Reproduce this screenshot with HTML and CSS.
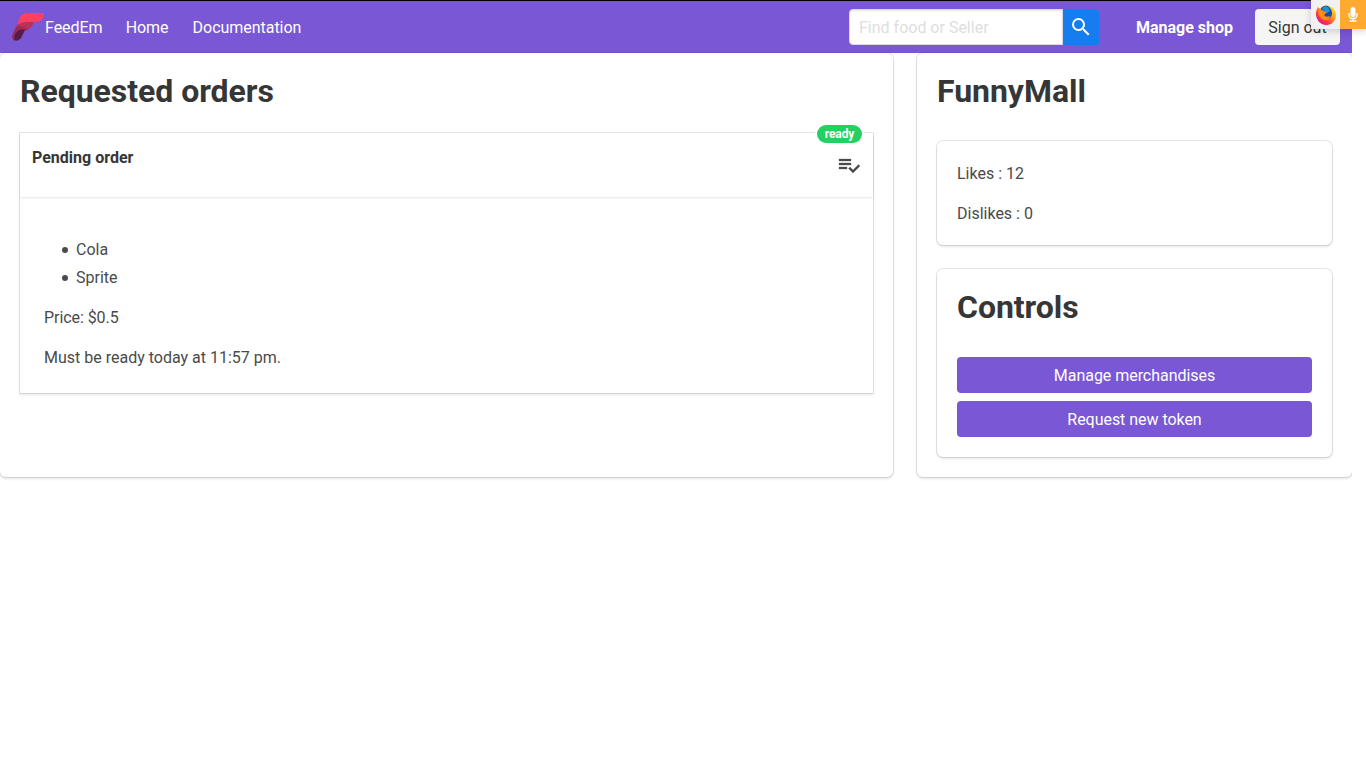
FILE: index.html
```html
<!DOCTYPE html>
<html lang="en">
<head>
<meta charset="utf-8">
<title>FeedEm</title>
<link rel="stylesheet" href="styles.css">
</head>
<body>
<div class="app">
  <nav class="navbar">
    <a class="navbar-item brand">
      <svg class="logo" viewBox="0 0 32 28" width="32" height="28">
        <path d="M8 4Q11 0 16 0H32Q32 9 23 9H15L4 15Z" fill="#ff4060"/>
        <path d="M5 12Q11 8 22 9Q19 17 12 18L1 22Z" fill="#b8335a"/>
        <path d="M1 20L4 14Q9 12 16 16Q13 18 9 18Z" fill="#9c2c55"/>
        <path d="M2 20Q8 15 13 17L9 25Q6 29 2 27Q-1 24 2 20Z" fill="#5a1a48"/>
        <path d="M4 15L0 23Q0 27 3 28Q0 22 7 17Z" fill="#963052"/>
      </svg>
      <span>FeedEm</span>
    </a>
    <a class="navbar-item">Home</a>
    <a class="navbar-item">Documentation</a>
    <div class="navbar-end">
      <form class="search">
        <input class="search-input" type="text" placeholder="Find food or Seller">
        <button class="search-button" type="button" aria-label="Search">
          <svg viewBox="0 0 24 24" width="24" height="24"><path fill="#fff" d="M9.5 3A6.5 6.5 0 0 1 16 9.5c0 1.61-.59 3.09-1.56 4.23l.27.27h.79l5 5-1.5 1.5-5-5v-.79l-.27-.27A6.52 6.52 0 0 1 9.5 16a6.5 6.5 0 0 1 0-13m0 2C7 5 5 7 5 9.5S7 14 9.5 14 14 12 14 9.5 12 5 9.5 5z"/></svg>
        </button>
      </form>
      <a class="manage">Manage shop</a>
      <a class="signout">Sign out</a>
    </div>
  </nav>
  <main class="columns">
    <section class="box orders">
      <h1 class="title">Requested orders</h1>
      <article class="card">
        <span class="tag">ready</span>
        <header class="card-header">
          <p class="card-title">Pending order</p>
          <svg class="check" viewBox="0 0 24 24" width="24" height="24"><path fill="#4a4a4a" stroke="#4a4a4a" stroke-width=".3" d="M14 10H2v2h12v-2m0-4H2v2h12V6M2 16h8v-2H2v2m19.500-4.500L23 13l-7 7-4.500-4.500L13 14l3 3 5.500-5.500z"/></svg>
        </header>
        <div class="card-content">
          <ul class="items"><li>Cola</li><li>Sprite</li></ul>
          <p class="price">Price: $0.5</p>
          <p>Must be ready today at 11:57 pm.</p>
        </div>
      </article>
    </section>
    <aside class="box shop">
      <h1 class="title">FunnyMall</h1>
      <div class="box stats"><p>Likes : 12</p><p>Dislikes : 0</p></div>
      <div class="box controls">
        <h1 class="title">Controls</h1>
        <a class="button">Manage merchandises</a>
        <a class="button">Request new token</a>
      </div>
    </aside>
  </main>
</div>
<div class="overlay">
  <div class="overlay-browser">
    <svg viewBox="0 0 22 22" width="22" height="22">
      <defs>
        <linearGradient id="flame" x1=".9" y1=".1" x2=".2" y2=".9"><stop offset="0" stop-color="#ffe226"/><stop offset=".4" stop-color="#ff9a1c"/><stop offset=".75" stop-color="#ff3647"/><stop offset="1" stop-color="#e31587"/></linearGradient>
      </defs>
      <path fill="url(#flame)" d="M2 5L3 3 5 5Q7 2 11 1L14 2Q20 4 21 10Q21 17 16 20Q9 23 4 18Q-1 12 2 5Z"/>
      <path fill="#174e9c" d="M6 4Q9 1 13 2Q17 5 17 10Q16 15 11 15Q6 14 6 9Z"/>
      <path fill="#1593e8" d="M7 4Q10 1 13 3L15 7 12 9 9 7Z"/>
      <path fill="#ff8a16" d="M3 6Q7 4 8 7L12 8 9 11Q11 14 15 12Q14 17 9 16Q3 14 3 6Z"/>
    </svg>
  </div>
  <div class="overlay-mic">
    <svg viewBox="0 0 12 16" width="12" height="16"><rect x="3.500" y="0" width="5" height="10" rx="2.500" fill="#fff"/><path d="M2 6V8Q2 11.500 6 11.500T10 8V6M6 11.500V14M2.500 14H9.500" fill="none" stroke="#fff" stroke-width="1.300"/></svg>
  </div>
</div>
</body>
</html>
```
FILE: styles.css
```css
* { box-sizing: border-box; margin: 0; padding: 0; }
html { overflow: hidden; background: #fff; }
body { font: 16px/24px Roboto, sans-serif; color: #4a4a4a; }
.app { width: 1352px; height: 768px; overflow: hidden; }
.navbar { display: flex; height: 53px; width: 1352px; border-top: 1px solid #000; background: #7957d5; color: #fff; }
.navbar::before { content: ""; position: absolute; top: 0; left: 0; width: 1366px; height: 1px; background: #000; }
.navbar-item { display: flex; align-items: center; padding: 2px 12px 0; letter-spacing: -.03px; }
.brand { padding-top: 0; }
.brand span { margin: 2px -1px 0 1px; }
.navbar-end { display: flex; align-items: center; margin-left: auto; padding-right: 12px; }
.search { display: flex; margin-right: 37px; }
.search-input { width: 214px; height: 36px; border: 1px solid #dbdbdb; border-radius: 4px 0 0 4px; padding: 0 9px; font: 16px Roboto, sans-serif; box-shadow: inset 0 1px 2px rgba(10,10,10,.1); }
.search-input::placeholder { color: #dedede; }
.search-button { display: flex; align-items: center; justify-content: center; width: 36px; height: 36px; border: 0; border-radius: 0 4px 4px 0; background: #167df0; }
.manage { width: 98px; white-space: nowrap; font-weight: 700; margin-right: 21px; padding-top: 2px; }
.signout { width: 85px; height: 36px; padding: 7px 0 5px; text-align: center; background: #f5f5f5; color: #363636; border-radius: 4px; }
.columns { display: flex; gap: 24px; }
.box { background: #fff; border-radius: 6px; padding: 20px; box-shadow: 0 2px 3px rgba(10,10,10,.1), 0 0 0 1px rgba(10,10,10,.1); }
.orders { width: 893px; height: 424px; }
.shop { width: 435px; height: 424px; }
.title { color: #363636; font-size: 32px; line-height: 36px; font-weight: 700; letter-spacing: -.04px; }
.card { position: relative; margin-top: 24px; box-shadow: 0 2px 3px rgba(10,10,10,.1), 0 0 0 1px rgba(10,10,10,.1); }
.tag { position: absolute; right: 11px; top: -8px; width: 45px; height: 18px; border-radius: 9px; background: #23d160; color: #fff; font-size: 12px; line-height: 18px; font-weight: 700; text-align: center; letter-spacing: -.1px; box-shadow: 0 0 0 2px #fff; }
.card-header { display: flex; justify-content: space-between; height: 64px; padding: 12px; box-shadow: 0 1px 2px rgba(10,10,10,.1); }
.card-title { margin-top: 1px; color: #363636; font-weight: 700; }
.check { margin-top: 8px; }
.card-content { padding: 41px 24px 23px; }
.items { display: grid; gap: 4px; margin-left: 18px; list-style: none; }
.items li { display: flex; align-items: center; gap: 8px; }
.items li::before { content: ""; width: 6px; height: 6px; border-radius: 50%; background: #4a4a4a; }
.card-content p { margin-top: 16px; }
.price { letter-spacing: -.06px; }
.stats { margin-top: 32px; height: 104px; padding-top: 21px; }
.stats p + p { margin-top: 16px; }
.controls { margin-top: 24px; height: 188px; }
.button { display: block; height: 36px; padding: 7px 6px 5px; border-radius: 4px; background: #7957d5; color: #fff; text-align: center; letter-spacing: -.04px; }
.title + .button { margin-top: 32px; }
.button + .button { margin-top: 8px; }
.overlay { position: absolute; top: 0; left: 1311px; display: flex; width: 55px; height: 29px; box-shadow: 0 2px 8px rgba(0,0,0,.18); }
.overlay-browser { display: flex; align-items: center; justify-content: center; width: 29px; background: #f1f1f1; padding-top: 1px; }
.overlay-mic { display: flex; align-items: center; justify-content: center; width: 26px; background: #ffa930; }
```
